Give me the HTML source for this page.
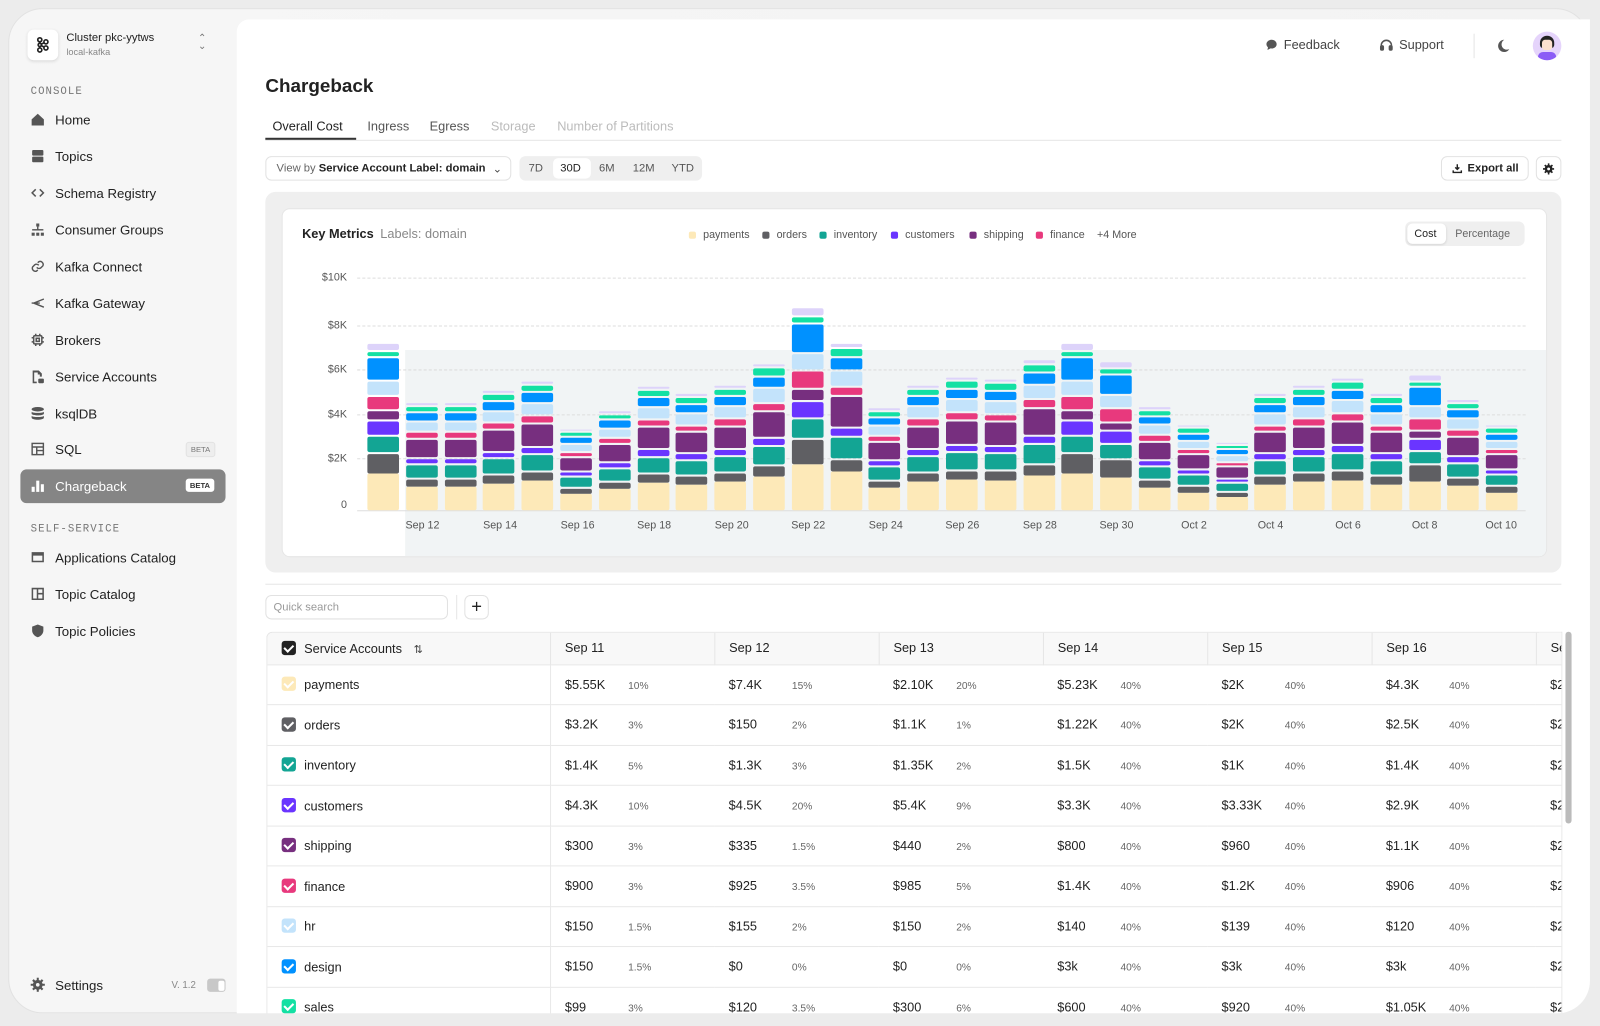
<!DOCTYPE html>
<html><head><meta charset="utf-8">
<style>
*{box-sizing:border-box;margin:0;padding:0}
body{width:1600px;height:1022px;overflow:hidden;background:#ececec;font-family:"Liberation Sans",sans-serif;color:#222;position:relative}
#s{position:absolute;left:0;top:0;width:1568px;height:1002px;transform:scale(1.0205);transform-origin:0 0}
.frame{position:absolute;left:8px;top:8px;width:1550px;height:985px;border-radius:34px;background:linear-gradient(90deg,#f6f6f6,#f3f3f3);border:1px solid #e2e2e2;overflow:hidden}
.abs{position:absolute}
.side-item{position:absolute;left:30px;display:flex;align-items:center;font-size:13px;color:#222;height:20px}
.side-item svg{width:14px;height:14px;margin-right:10px;fill:#555}
.sec{position:absolute;left:30px;font-family:"Liberation Mono",monospace;font-size:10.5px;letter-spacing:1px;color:#777}
.main{position:absolute;left:232px;top:19px;width:1326px;height:974px;background:#fff;border-radius:12px 0 32px 0}
.tab{position:absolute;top:117px;font-size:12.5px;color:#555}
.btn{position:absolute;border:1px solid #e2e2e2;border-radius:6px;background:#fff;font-size:11px;display:flex;align-items:center}
.legend{position:absolute;top:224px;font-size:10.5px;color:#555;display:flex;align-items:center}
.legend i{display:inline-block;width:7px;height:7px;border-radius:2px;margin-right:7px}
.ylab{position:absolute;left:296px;width:44px;text-align:right;font-size:10.5px;color:#555}
.grid{position:absolute;left:350px;width:1145px;border-top:1px dashed #ddd}
.bars{position:absolute;left:360px;top:300px;height:200px;width:1128px;display:flex;gap:6.8px;align-items:flex-end}
.bar{width:31px;display:flex;flex-direction:column-reverse}
.bar i{display:block;border-radius:2px;margin-top:2px}
.A i:nth-child(1){flex:37;background:#fde9b8;margin-top:0}
.A i:nth-child(2){flex:20;background:#5f5f63}
.A i:nth-child(3){flex:15;background:#13a594}
.A i:nth-child(4){flex:13;background:#6a35ff}
.A i:nth-child(5){flex:8;background:#772f7f}
.A i:nth-child(6){flex:13;background:#e8397d}
.A i:nth-child(7){flex:13;background:#c3e3fb}
.A i:nth-child(8){flex:22;background:#0091ff}
.A i:nth-child(9){flex:4;background:#13e0a3}
.A i:nth-child(10){flex:6;background:#ddd3fa}
.B i:nth-child(1){flex:27;background:#fde9b8;margin-top:0}
.B i:nth-child(2){flex:8;background:#5f5f63}
.B i:nth-child(3){flex:14;background:#13a594}
.B i:nth-child(4){flex:5;background:#6a35ff}
.B i:nth-child(5){flex:20;background:#772f7f}
.B i:nth-child(6){flex:5;background:#e8397d}
.B i:nth-child(7){flex:10;background:#c3e3fb}
.B i:nth-child(8){flex:8;background:#0091ff}
.B i:nth-child(9){flex:5;background:#13e0a3}
.B i:nth-child(10){flex:2;background:#ddd3fa}
.xl{position:absolute;top:509px;font-size:10.5px;color:#555;width:60px;margin-left:-30px;text-align:center}
table{border-collapse:collapse;font-size:12.5px;table-layout:fixed}
.tw{position:absolute;left:261px;top:619px;width:1270px;height:380px;overflow:hidden;border:1px solid #e5e5e5;border-bottom:none;border-radius:6px 0 0 0}
td,th{height:39.5px;border-bottom:1px solid #e8e8e8;white-space:nowrap;overflow:hidden;font-weight:normal;text-align:left}
th{height:31px;background:#f8f8f8;border-right:1px solid #e5e5e5;padding-left:14px}
td{padding-left:14px}
td.n{border-right:1px solid #e8e8e8;padding-left:14px}
td .p{display:inline-block;width:42px;font-size:10px;color:#666}
td .v{display:inline-block;width:62px}
.cb{display:inline-block;width:14px;height:14px;border-radius:3px;vertical-align:-2px;margin-right:8px;position:relative}
.cb:after{content:"";position:absolute;left:4px;top:2px;width:4px;height:7px;border:solid #fff;border-width:0 2px 2px 0;transform:rotate(45deg)}
</style></head><body>
<div id="s">
<div class="frame"></div>

<div class="abs" style="left:27px;top:29px;width:30px;height:30px;background:#fff;border-radius:6px;box-shadow:0 1px 3px rgba(0,0,0,.12);display:flex;align-items:center;justify-content:center">
<svg width="14" height="16" viewBox="0 0 14 16" fill="none" stroke="#222" stroke-width="1.6"><circle cx="4" cy="3" r="2"/><circle cx="4" cy="13" r="2"/><circle cx="10" cy="5" r="2"/><circle cx="10" cy="11" r="2"/><circle cx="4" cy="8" r="1.6"/><path d="M4 5v1.5M4 9.5V11M5.5 7.3L8.3 5.8M5.5 8.7l2.8 1.5"/></svg></div>
<div class="abs" style="left:65px;top:31px;font-size:11px;color:#222">Cluster pkc-yytws</div>
<div class="abs" style="left:65px;top:46px;font-size:9px;color:#888">local-kafka</div>
<div class="abs" style="left:194px;top:34px;font-size:10px;color:#777;line-height:8px">&#8963;<br>&#8964;</div>

<div class="sec" style="top:84px">CONSOLE</div>
<div class="side-item" style="top:107px"><svg viewBox="0 0 14 14"><path d="M1 7L7 1.5 13 7v6H1z"/></svg>Home</div>
<div class="side-item" style="top:143px"><svg viewBox="0 0 14 14"><rect x="1.5" y="1" width="11" height="5.5" rx="1"/><rect x="1.5" y="7.5" width="11" height="5.5" rx="1"/></svg>Topics</div>
<div class="side-item" style="top:179px"><svg viewBox="0 0 14 14" fill="none" stroke="#555" stroke-width="1.5" style="fill:none"><path d="M5 3.5L1.5 7 5 10.5M9 3.5L12.5 7 9 10.5"/></svg>Schema Registry</div>
<div class="side-item" style="top:215px"><svg viewBox="0 0 14 14"><rect x="5.5" y="1" width="3" height="3"/><rect x="6.3" y="4" width="1.4" height="3"/><rect x="1.5" y="6.5" width="11" height="1.4"/><rect x="1" y="10" width="3" height="3"/><rect x="5.5" y="10" width="3" height="3"/><rect x="10" y="10" width="3" height="3"/></svg>Consumer Groups</div>
<div class="side-item" style="top:251px"><svg viewBox="0 0 14 14" style="fill:none" stroke="#555" stroke-width="1.4"><path d="M6 8a3 3 0 004 .5l2-2a3 3 0 00-4-4l-1 1M8 6a3 3 0 00-4-.5l-2 2a3 3 0 004 4l1-1"/></svg>Kafka Connect</div>
<div class="side-item" style="top:287px"><svg viewBox="0 0 14 14" style="fill:none" stroke="#555" stroke-width="1.4"><path d="M13 3L3 7l10 4M1 7h8"/></svg>Kafka Gateway</div>
<div class="side-item" style="top:323px"><svg viewBox="0 0 14 14" style="fill:none" stroke="#555" stroke-width="1.5"><rect x="3" y="3" width="8" height="8" rx="1"/><rect x="5.5" y="5.5" width="3" height="3"/><path d="M5 1v2M9 1v2M5 11v2M9 11v2M1 5h2M1 9h2M11 5h2M11 9h2"/></svg>Brokers</div>
<div class="side-item" style="top:359px"><svg viewBox="0 0 14 14"><path d="M2 1h6l3 3v3H9V5H7V3H3.5v9H6v1.5H2z"/><rect x="7.5" y="9" width="5.5" height="4.5" rx="1"/></svg>Service Accounts</div>
<div class="side-item" style="top:395px"><svg viewBox="0 0 14 14"><ellipse cx="7" cy="3" rx="6" ry="2.2"/><path d="M1 5.5c1 1.5 11 1.5 12 0v2c-1 2-11 2-12 0zM1 9.5c1 1.5 11 1.5 12 0v2c-1 2.5-11 2.5-12 0z"/></svg>ksqlDB</div>
<div class="side-item" style="top:430px"><svg viewBox="0 0 14 14" style="fill:none" stroke="#555" stroke-width="1.4"><rect x="1.5" y="1.5" width="11" height="11"/><path d="M1.5 5h11M6 5v7.5M6 8.5h6.5"/></svg>SQL</div>
<div class="abs" style="left:182px;top:433px;font-size:7.5px;color:#777;background:#eee;border:1px solid #e2e2e2;border-radius:3px;padding:2px 4px">BETA</div>
<div class="abs" style="left:20px;top:460px;width:201px;height:33px;background:#858585;border-radius:6px"></div>
<div class="side-item" style="top:466px;color:#fff"><svg viewBox="0 0 14 14" style="fill:#fff"><rect x="1" y="8" width="3" height="5"/><rect x="5.5" y="2" width="3" height="11"/><rect x="10" y="5.5" width="3" height="7.5"/></svg>Chargeback</div>
<div class="abs" style="left:182px;top:469px;font-size:7.5px;color:#333;background:#fff;border-radius:3px;padding:2px 4px;font-weight:bold">BETA</div>
<div class="sec" style="top:513px">SELF-SERVICE</div>
<div class="side-item" style="top:536px"><svg viewBox="0 0 14 14"><path d="M1 2h12v10H1zM2.5 5.5v5h9v-5z"/></svg>Applications Catalog</div>
<div class="side-item" style="top:572px"><svg viewBox="0 0 14 14"><path d="M1 1h12v12H1zM2.5 2.5v9h3.5v-9zM7.5 2.5v3.5h4v-3.5zM7.5 7.5v4h4v-4z"/></svg>Topic Catalog</div>
<div class="side-item" style="top:608px"><svg viewBox="0 0 14 14"><path d="M7 1l5.5 2v4c0 3-2.5 5.5-5.5 6.5C4 12.5 1.5 10 1.5 7V3z"/></svg>Topic Policies</div>
<div class="side-item" style="top:955px"><svg viewBox="0 0 14 14"><circle cx="7" cy="7" r="4.8"/><path d="M6 0h2v2.5H6zM6 11.5h2V14H6zM0 6h2.5v2H0zM11.5 6H14v2h-2.5zM1.5 3l1.5-1.5 2 2-1.5 1.5zM9 10.5l1.5-1.5 2 2-1.5 1.5zM1.5 11l2-2 1.5 1.5-2 2zM9 3.5l2-2 1.5 1.5-2 2z"/><circle cx="7" cy="7" r="1.8" fill="#f5f5f5"/></svg>Settings</div>
<div class="abs" style="left:168px;top:960px;font-size:9.5px;color:#888">V. 1.2</div>
<div class="abs" style="left:203px;top:959px;width:18px;height:13px;border-radius:3px;background:#c8c8c8"><div style="position:absolute;right:1.5px;top:1.5px;width:6px;height:10px;background:#fff;border-radius:2px"></div></div>

<div class="main"></div>
<div class="abs" style="left:1240px;top:37px;font-size:12.5px;color:#444;display:flex;align-items:center"><svg width="12" height="12" viewBox="0 0 12 12" style="margin-right:6px"><path d="M6 1C3 1 1 3 1 5.3c0 1.2.6 2.2 1.5 3L2 11l3-1.6c.3 0 .7.1 1 .1 3 0 5-2 5-4.2S9 1 6 1z" fill="#555"/></svg>Feedback</div>
<div class="abs" style="left:1352px;top:37px;font-size:12.5px;color:#444;display:flex;align-items:center"><svg width="13" height="12" viewBox="0 0 13 12" style="margin-right:6px" fill="none" stroke="#555" stroke-width="1.5"><path d="M1.5 9V6.5a5 5 0 0110 0V9"/><rect x="1" y="7" width="2.5" height="4" rx="1" fill="#555"/><rect x="9.5" y="7" width="2.5" height="4" rx="1" fill="#555"/></svg>Support</div>
<div class="abs" style="left:1444px;top:33px;width:1px;height:24px;background:#e5e5e5"></div>
<svg class="abs" style="left:1466px;top:38px" width="14" height="14" viewBox="0 0 14 14"><path d="M8 1a6 6 0 100 12 6 6 0 005-3A5 5 0 018 1z" fill="#555"/></svg>
<div class="abs" style="left:1502px;top:31px;width:28px;height:28px;border-radius:50%;background:#e5d4fb;overflow:hidden"><div style="position:absolute;left:7px;top:4px;width:14px;height:12px;background:#222;border-radius:7px 7px 3px 3px"></div><div style="position:absolute;left:9px;top:8px;width:10px;height:10px;background:#fde1cf;border-radius:3px"></div><div style="position:absolute;left:5px;top:20px;width:18px;height:10px;background:#8b5cf6;border-radius:6px"></div></div>

<div class="abs" style="left:260px;top:73px;font-size:18.5px;font-weight:bold;color:#222">Chargeback</div>
<div class="tab" style="left:267px;color:#222">Overall Cost</div>
<div class="tab" style="left:360px">Ingress</div>
<div class="tab" style="left:421px">Egress</div>
<div class="tab" style="left:481px;color:#bbb">Storage</div>
<div class="tab" style="left:546px;color:#bbb">Number of Partitions</div>
<div class="abs" style="left:260px;top:137px;width:1270px;height:1px;background:#e6e6e6"></div>
<div class="abs" style="left:260px;top:135px;width:89px;height:2px;background:#333"></div>

<div class="btn" style="left:260px;top:153px;width:241px;height:24px;padding-left:10px;color:#666">View by&nbsp;<b style="color:#222">Service Account Label: domain</b><span style="margin-left:7px;color:#444">&#8964;</span></div>
<div class="abs" style="left:509px;top:153px;width:179px;height:24px;background:#efefef;border-radius:6px;font-size:11px;color:#555"></div>
<div class="abs" style="left:542px;top:155px;width:37px;height:20px;background:#fff;border-radius:5px"></div>
<div class="abs" style="left:518px;top:159px;font-size:11px;color:#555">7D</div>
<div class="abs" style="left:549px;top:159px;font-size:11px;color:#222">30D</div>
<div class="abs" style="left:587px;top:159px;font-size:11px;color:#555">6M</div>
<div class="abs" style="left:620px;top:159px;font-size:11px;color:#555">12M</div>
<div class="abs" style="left:658px;top:159px;font-size:11px;color:#555">YTD</div>
<div class="btn" style="left:1412px;top:153px;width:86px;height:24px;padding-left:10px;font-weight:bold;color:#222"><svg width="10" height="10" viewBox="0 0 10 10" fill="none" stroke="#222" stroke-width="1.4" style="margin-right:5px"><path d="M5 1v5M3 4l2 2 2-2M1 7v2h8V7"/></svg>Export all</div>
<div class="btn" style="left:1505px;top:153px;width:25px;height:24px;justify-content:center"><svg width="11" height="11" viewBox="0 0 14 14" fill="#222"><circle cx="7" cy="7" r="4.8"/><path d="M6 0h2v2.5H6zM6 11.5h2V14H6zM0 6h2.5v2H0zM11.5 6H14v2h-2.5zM1.5 3l1.5-1.5 2 2-1.5 1.5zM9 10.5l1.5-1.5 2 2-1.5 1.5zM1.5 11l2-2 1.5 1.5-2 2zM9 3.5l2-2 1.5 1.5-2 2z"/><circle cx="7" cy="7" r="1.8" fill="#fff"/></svg></div>

<div class="abs" style="left:260px;top:188px;width:1270px;height:373px;background:#efefef;border-radius:10px"></div>
<div class="abs" style="left:276px;top:204px;width:1240px;height:342px;background:#fff;border-radius:8px;border:1px solid #e6e6e6;overflow:hidden"><div style="position:absolute;left:120px;top:138px;width:1120px;height:204px;background:#f1f4f5"></div></div>
<div class="abs" style="left:296px;top:222px;font-size:12.5px;font-weight:bold;color:#222">Key Metrics <span style="font-weight:normal;color:#888;margin-left:3px">Labels: domain</span></div>
<div class="legend" style="left:675px"><i style="background:#fde9b8"></i>payments</div>
<div class="legend" style="left:747px"><i style="background:#5f5f63"></i>orders</div>
<div class="legend" style="left:803px"><i style="background:#13a594"></i>inventory</div>
<div class="legend" style="left:873px"><i style="background:#6a35ff"></i>customers</div>
<div class="legend" style="left:950px"><i style="background:#772f7f"></i>shipping</div>
<div class="legend" style="left:1015px"><i style="background:#e8397d"></i>finance</div>
<div class="legend" style="left:1075px">+4 More</div>
<div class="abs" style="left:1377px;top:217px;width:117px;height:24px;background:#efefef;border-radius:6px"></div>
<div class="abs" style="left:1379px;top:219px;width:38px;height:20px;background:#fff;border-radius:5px;box-shadow:0 1px 2px rgba(0,0,0,.1)"></div>
<div class="abs" style="left:1386px;top:223px;font-size:10.5px;color:#222">Cost</div>
<div class="abs" style="left:1426px;top:223px;font-size:10.5px;color:#666">Percentage</div>

<div class="ylab" style="top:266px">$10K</div><div class="grid" style="top:272px"></div>
<div class="ylab" style="top:313px">$8K</div><div class="grid" style="top:319px"></div>
<div class="ylab" style="top:356px">$6K</div><div class="grid" style="top:362px"></div>
<div class="ylab" style="top:400px">$4K</div><div class="grid" style="top:406px"></div>
<div class="ylab" style="top:443px">$2K</div><div class="grid" style="top:449px"></div>
<div class="ylab" style="top:489px">0</div>
<div class="abs" style="left:350px;top:500px;width:1145px;height:1px;background:#ddd"></div>

<div class="bars">
<div class="bar A" style="height:165px"><i></i><i></i><i></i><i></i><i></i><i></i><i></i><i></i><i></i><i></i></div>
<div class="bar B" style="height:107px"><i></i><i></i><i></i><i></i><i></i><i></i><i></i><i></i><i></i><i></i></div>
<div class="bar B" style="height:107px"><i></i><i></i><i></i><i></i><i></i><i></i><i></i><i></i><i></i><i></i></div>
<div class="bar B" style="height:119px"><i></i><i></i><i></i><i></i><i></i><i></i><i></i><i></i><i></i><i></i></div>
<div class="bar B" style="height:128px"><i></i><i></i><i></i><i></i><i></i><i></i><i></i><i></i><i></i><i></i></div>
<div class="bar B" style="height:81px"><i></i><i></i><i></i><i></i><i></i><i></i><i></i><i></i><i></i><i></i></div>
<div class="bar B" style="height:99px"><i></i><i></i><i></i><i></i><i></i><i></i><i></i><i></i><i></i><i></i></div>
<div class="bar B" style="height:123px"><i></i><i></i><i></i><i></i><i></i><i></i><i></i><i></i><i></i><i></i></div>
<div class="bar B" style="height:116px"><i></i><i></i><i></i><i></i><i></i><i></i><i></i><i></i><i></i><i></i></div>
<div class="bar B" style="height:124px"><i></i><i></i><i></i><i></i><i></i><i></i><i></i><i></i><i></i><i></i></div>
<div class="bar B" style="height:145px"><i></i><i></i><i></i><i></i><i></i><i></i><i></i><i></i><i></i><i></i></div>
<div class="bar A" style="height:200px"><i></i><i></i><i></i><i></i><i></i><i></i><i></i><i></i><i></i><i></i></div>
<div class="bar B" style="height:165px"><i></i><i></i><i></i><i></i><i></i><i></i><i></i><i></i><i></i><i></i></div>
<div class="bar B" style="height:102px"><i></i><i></i><i></i><i></i><i></i><i></i><i></i><i></i><i></i><i></i></div>
<div class="bar B" style="height:124px"><i></i><i></i><i></i><i></i><i></i><i></i><i></i><i></i><i></i><i></i></div>
<div class="bar B" style="height:132px"><i></i><i></i><i></i><i></i><i></i><i></i><i></i><i></i><i></i><i></i></div>
<div class="bar B" style="height:130px"><i></i><i></i><i></i><i></i><i></i><i></i><i></i><i></i><i></i><i></i></div>
<div class="bar B" style="height:149px"><i></i><i></i><i></i><i></i><i></i><i></i><i></i><i></i><i></i><i></i></div>
<div class="bar A" style="height:165px"><i></i><i></i><i></i><i></i><i></i><i></i><i></i><i></i><i></i><i></i></div>
<div class="bar A" style="height:147px"><i></i><i></i><i></i><i></i><i></i><i></i><i></i><i></i><i></i><i></i></div>
<div class="bar B" style="height:103px"><i></i><i></i><i></i><i></i><i></i><i></i><i></i><i></i><i></i><i></i></div>
<div class="bar B" style="height:85px"><i></i><i></i><i></i><i></i><i></i><i></i><i></i><i></i><i></i><i></i></div>
<div class="bar B" style="height:68px"><i></i><i></i><i></i><i></i><i></i><i></i><i></i><i></i><i></i><i></i></div>
<div class="bar B" style="height:116px"><i></i><i></i><i></i><i></i><i></i><i></i><i></i><i></i><i></i><i></i></div>
<div class="bar B" style="height:124px"><i></i><i></i><i></i><i></i><i></i><i></i><i></i><i></i><i></i><i></i></div>
<div class="bar B" style="height:131px"><i></i><i></i><i></i><i></i><i></i><i></i><i></i><i></i><i></i><i></i></div>
<div class="bar B" style="height:116px"><i></i><i></i><i></i><i></i><i></i><i></i><i></i><i></i><i></i><i></i></div>
<div class="bar A" style="height:134px"><i></i><i></i><i></i><i></i><i></i><i></i><i></i><i></i><i></i><i></i></div>
<div class="bar B" style="height:110px"><i></i><i></i><i></i><i></i><i></i><i></i><i></i><i></i><i></i><i></i></div>
<div class="bar B" style="height:85px"><i></i><i></i><i></i><i></i><i></i><i></i><i></i><i></i><i></i><i></i></div>
</div>
<div class="xl" style="left:414px">Sep 12</div><div class="xl" style="left:490px">Sep 14</div><div class="xl" style="left:566px">Sep 16</div><div class="xl" style="left:641px">Sep 18</div><div class="xl" style="left:717px">Sep 20</div><div class="xl" style="left:792px">Sep 22</div><div class="xl" style="left:868px">Sep 24</div><div class="xl" style="left:943px">Sep 26</div><div class="xl" style="left:1019px">Sep 28</div><div class="xl" style="left:1094px">Sep 30</div><div class="xl" style="left:1170px">Oct 2</div><div class="xl" style="left:1245px">Oct 4</div><div class="xl" style="left:1321px">Oct 6</div><div class="xl" style="left:1396px">Oct 8</div><div class="xl" style="left:1471px">Oct 10</div>

<div class="abs" style="left:260px;top:572px;width:1270px;height:1px;background:#e6e6e6"></div>
<div class="abs" style="left:260px;top:583px;width:179px;height:24px;border:1px solid #e2e2e2;border-radius:6px;font-size:11px;color:#999;padding:5px 7px">Quick search</div>
<div class="abs" style="left:447px;top:583px;width:1px;height:24px;background:#e6e6e6"></div>
<div class="abs" style="left:455px;top:583px;width:24px;height:24px;border:1px solid #e2e2e2;border-radius:6px;font-size:18px;line-height:20px;text-align:center;color:#222">+</div>

<div class="tw">
<table style="width:1400px">
<colgroup><col style="width:277px"><col style="width:161px"><col style="width:161px"><col style="width:161px"><col style="width:161px"><col style="width:161px"><col style="width:161px"><col style="width:161px"></colgroup>
<tr><th><span class="cb" style="background:#222"></span>Service Accounts <span style="margin-left:8px;font-size:11px;color:#444">&#8645;</span></th><th>Sep 11</th><th>Sep 12</th><th>Sep 13</th><th>Sep 14</th><th>Sep 15</th><th>Sep 16</th><th>Sep 17</th></tr>
<tr><td class="n"><span class="cb" style="background:#fde9b8"></span>payments</td><td><span class="v">$5.55K</span><span class="p">10%</span></td><td><span class="v">$7.4K</span><span class="p">15%</span></td><td><span class="v">$2.10K</span><span class="p">20%</span></td><td><span class="v">$5.23K</span><span class="p">40%</span></td><td><span class="v">$2K</span><span class="p">40%</span></td><td><span class="v">$4.3K</span><span class="p">40%</span></td><td>$2.1K</td></tr>
<tr><td class="n"><span class="cb" style="background:#5f5f63"></span>orders</td><td><span class="v">$3.2K</span><span class="p">3%</span></td><td><span class="v">$150</span><span class="p">2%</span></td><td><span class="v">$1.1K</span><span class="p">1%</span></td><td><span class="v">$1.22K</span><span class="p">40%</span></td><td><span class="v">$2K</span><span class="p">40%</span></td><td><span class="v">$2.5K</span><span class="p">40%</span></td><td>$2.1K</td></tr>
<tr><td class="n"><span class="cb" style="background:#13a594"></span>inventory</td><td><span class="v">$1.4K</span><span class="p">5%</span></td><td><span class="v">$1.3K</span><span class="p">3%</span></td><td><span class="v">$1.35K</span><span class="p">2%</span></td><td><span class="v">$1.5K</span><span class="p">40%</span></td><td><span class="v">$1K</span><span class="p">40%</span></td><td><span class="v">$1.4K</span><span class="p">40%</span></td><td>$2.1K</td></tr>
<tr><td class="n"><span class="cb" style="background:#6a35ff"></span>customers</td><td><span class="v">$4.3K</span><span class="p">10%</span></td><td><span class="v">$4.5K</span><span class="p">20%</span></td><td><span class="v">$5.4K</span><span class="p">9%</span></td><td><span class="v">$3.3K</span><span class="p">40%</span></td><td><span class="v">$3.33K</span><span class="p">40%</span></td><td><span class="v">$2.9K</span><span class="p">40%</span></td><td>$2.1K</td></tr>
<tr><td class="n"><span class="cb" style="background:#772f7f"></span>shipping</td><td><span class="v">$300</span><span class="p">3%</span></td><td><span class="v">$335</span><span class="p">1.5%</span></td><td><span class="v">$440</span><span class="p">2%</span></td><td><span class="v">$800</span><span class="p">40%</span></td><td><span class="v">$960</span><span class="p">40%</span></td><td><span class="v">$1.1K</span><span class="p">40%</span></td><td>$2.1K</td></tr>
<tr><td class="n"><span class="cb" style="background:#e8397d"></span>finance</td><td><span class="v">$900</span><span class="p">3%</span></td><td><span class="v">$925</span><span class="p">3.5%</span></td><td><span class="v">$985</span><span class="p">5%</span></td><td><span class="v">$1.4K</span><span class="p">40%</span></td><td><span class="v">$1.2K</span><span class="p">40%</span></td><td><span class="v">$906</span><span class="p">40%</span></td><td>$2.1K</td></tr>
<tr><td class="n"><span class="cb" style="background:#c3e3fb"></span>hr</td><td><span class="v">$150</span><span class="p">1.5%</span></td><td><span class="v">$155</span><span class="p">2%</span></td><td><span class="v">$150</span><span class="p">2%</span></td><td><span class="v">$140</span><span class="p">40%</span></td><td><span class="v">$139</span><span class="p">40%</span></td><td><span class="v">$120</span><span class="p">40%</span></td><td>$2.1K</td></tr>
<tr><td class="n"><span class="cb" style="background:#0091ff"></span>design</td><td><span class="v">$150</span><span class="p">1.5%</span></td><td><span class="v">$0</span><span class="p">0%</span></td><td><span class="v">$0</span><span class="p">0%</span></td><td><span class="v">$3k</span><span class="p">40%</span></td><td><span class="v">$3k</span><span class="p">40%</span></td><td><span class="v">$3k</span><span class="p">40%</span></td><td>$2.1K</td></tr>
<tr><td class="n"><span class="cb" style="background:#13e0a3"></span>sales</td><td><span class="v">$99</span><span class="p">3%</span></td><td><span class="v">$120</span><span class="p">3.5%</span></td><td><span class="v">$300</span><span class="p">6%</span></td><td><span class="v">$600</span><span class="p">40%</span></td><td><span class="v">$920</span><span class="p">40%</span></td><td><span class="v">$1.05K</span><span class="p">40%</span></td><td>$2.1K</td></tr>
</table>
</div>
<div class="abs" style="left:1534px;top:619px;width:6px;height:188px;background:#bbb;border-radius:3px"></div>
<div class="abs" style="left:0;top:993px;width:1568px;height:12px;background:#ececec"></div>
</div>
</body></html>
